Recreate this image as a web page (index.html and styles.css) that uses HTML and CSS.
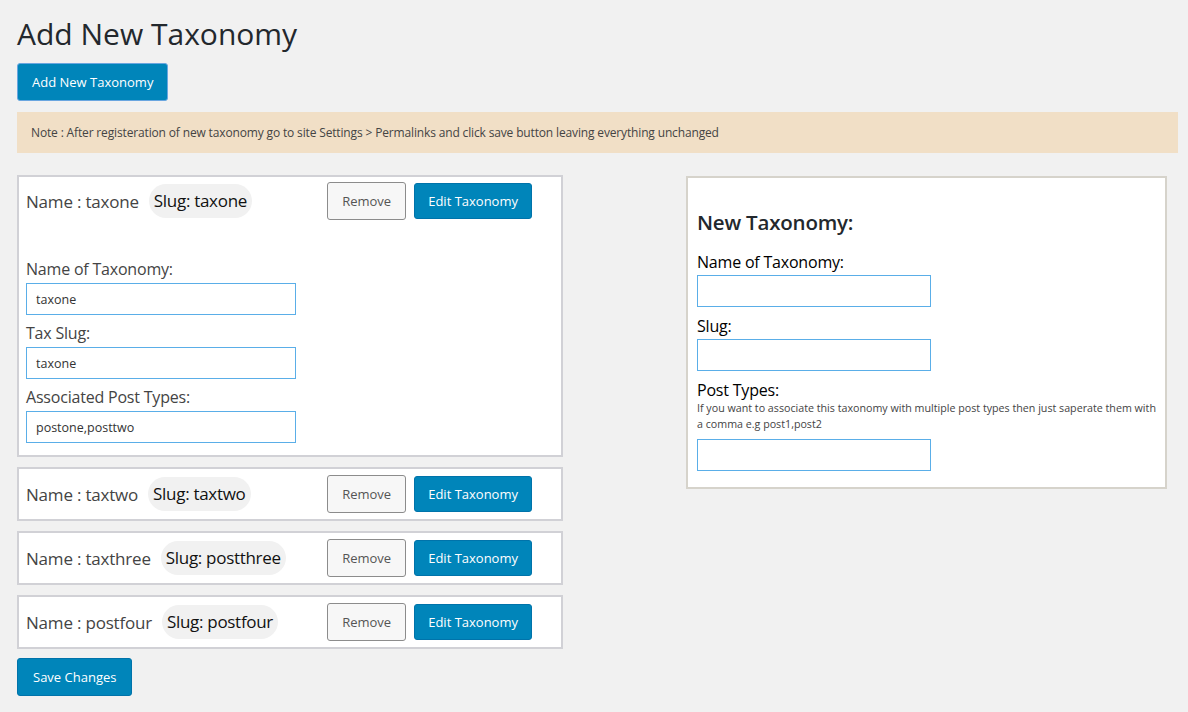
FILE: index.html
```html
<!DOCTYPE html>
<html>
<head>
<meta charset="utf-8">
<link rel="stylesheet" href="styles.css">
</head>
<body>
<div class="wrap">
  <h1 class="title">Add New Taxonomy</h1>
  <button class="btn btn-primary btn-add">Add New Taxonomy</button>
  <div class="notice">Note : After registeration of new taxonomy go to site Settings &gt; Permalinks and click save button leaving everything unchanged</div>
  <div class="columns">
    <div class="left">
      <div class="card">
        <div class="row">
          <span class="name">Name : taxone</span>
          <span class="slug">Slug: taxone</span>
          <span class="actions">
            <button class="btn btn-secondary">Remove</button>
            <button class="btn btn-primary">Edit Taxonomy</button>
          </span>
        </div>
        <div class="edit">
          <label class="lbl">Name of Taxonomy:</label>
          <input class="inp" type="text" value="taxone">
          <label class="lbl">Tax Slug:</label>
          <input class="inp" type="text" value="taxone">
          <label class="lbl">Associated Post Types:</label>
          <input class="inp" type="text" value="postone,posttwo">
        </div>
      </div>
      <div class="card">
        <div class="row">
          <span class="name">Name : taxtwo</span>
          <span class="slug">Slug: taxtwo</span>
          <span class="actions">
            <button class="btn btn-secondary">Remove</button>
            <button class="btn btn-primary">Edit Taxonomy</button>
          </span>
        </div>
      </div>
      <div class="card">
        <div class="row">
          <span class="name">Name : taxthree</span>
          <span class="slug">Slug: postthree</span>
          <span class="actions">
            <button class="btn btn-secondary">Remove</button>
            <button class="btn btn-primary">Edit Taxonomy</button>
          </span>
        </div>
      </div>
      <div class="card">
        <div class="row">
          <span class="name">Name : postfour</span>
          <span class="slug">Slug: postfour</span>
          <span class="actions">
            <button class="btn btn-secondary">Remove</button>
            <button class="btn btn-primary">Edit Taxonomy</button>
          </span>
        </div>
      </div>
      <button class="btn btn-primary btn-save">Save Changes</button>
    </div>
    <div class="right">
      <h2 class="panel-title">New Taxonomy:</h2>
      <label class="rlbl">Name of Taxonomy:</label>
      <input class="inp rinp" type="text">
      <label class="rlbl">Slug:</label>
      <input class="inp rinp" type="text">
      <label class="rlbl rlbl-post">Post Types:</label>
      <p class="hint">If you want to associate this taxonomy with multiple post types then just saperate them with a comma e.g post1,post2</p>
      <input class="inp rinp" type="text">
    </div>
  </div>
</div>
</body>
</html>
```
FILE: styles.css
```css
html, body {
  margin: 0;
  padding: 0;
  background: #f1f1f1;
}
body {
  font-family: "Open Sans", "Noto Sans", "Liberation Sans", sans-serif;
  color: #444;
}
.wrap {
  padding: 14px 10px 0 17px;
}
.title {
  margin: 0;
  font-size: 30px;
  font-weight: 400;
  color: #23282d;
  line-height: 40px;
  letter-spacing: 0;
}
.btn {
  font-family: inherit;
  font-size: 13px;
  border-radius: 3px;
  cursor: pointer;
  padding: 0 13px;
  letter-spacing: 0;
}
.btn-primary {
  background: #0085ba;
  border: 1px solid #0073aa;
  color: #fff;
  height: 36px;
}
.btn-secondary {
  background: #f7f7f7;
  border: 1px solid #8c8c8c;
  color: #555;
  height: 38px;
  padding: 0 14px;
}
.btn-add {
  margin-top: 9px;
  height: 38px;
  padding: 0 14px;
  border: 1px solid #6aa6e0;
}
.notice {
  margin-top: 11px;
  background: #f1dfc6;
  font-size: 12px;
  color: #444;
  padding: 0 14px;
  height: 41px;
  line-height: 41px;
  letter-spacing: -0.15px;
}
.columns {
  display: flex;
  gap: 123px;
  margin-top: 22px;
}
.left {
  width: 546px;
  display: flex;
  flex-direction: column;
  gap: 10px;
}
.card {
  background: #fff;
  border: 2px solid #d1d1d6;
}
.row {
  display: flex;
  align-items: center;
  height: 50px;
  padding: 0 7px;
}
.card:first-child .row {
  height: 48px;
}
.name {
  font-size: 17px;
  color: #444;
  letter-spacing: -0.2px;
}
.slug {
  margin-left: 10px;
  background: #f1f1f1;
  color: #111;
  font-size: 17px;
  letter-spacing: -0.3px;
  border-radius: 17px;
  height: 34px;
  line-height: 34px;
  padding: 0 5px;
}
.actions {
  margin-left: auto;
  margin-right: 22px;
  display: flex;
  gap: 8px;
  align-items: center;
}
.edit {
  display: flex;
  flex-direction: column;
  align-items: flex-start;
  padding: 34px 7px 12px;
}
.lbl {
  font-size: 16px;
  color: #444;
  letter-spacing: -0.2px;
  line-height: 20px;
  margin-bottom: 4px;
}
.inp {
  box-sizing: border-box;
  width: 270px;
  height: 32px;
  border: 1px solid #5aaee8;
  background: #fff;
  font-family: inherit;
  font-size: 12.5px;
  color: #333;
  padding: 0 9px;
  margin: 0 0 8px;
  outline: none;
}
.edit .inp:last-child {
  margin-bottom: 0;
}
.btn-save {
  align-self: flex-start;
  height: 38px;
  margin-top: -1px;
  padding: 0 15px;
}
.right {
  box-sizing: border-box;
  width: 481px;
  height: 313px;
  margin-top: 1px;
  background: #fff;
  border: 2px solid #d6d3cb;
  padding: 28px 4px 0 9px;
  display: flex;
  flex-direction: column;
  align-items: flex-start;
}
.panel-title {
  margin: 0 0 14px;
  font-size: 20.5px;
  font-weight: 600;
  color: #23282d;
  letter-spacing: -0.2px;
  line-height: 32px;
}
.rlbl {
  font-size: 16px;
  color: #000;
  letter-spacing: -0.2px;
  line-height: 20px;
  margin-bottom: 3px;
}
.rinp {
  width: 234px;
  margin-bottom: 9px;
}
.rlbl-post {
  margin-bottom: 0;
}
.hint {
  margin: 0 0 7px;
  font-size: 10.7px;
  line-height: 16px;
  color: #444;
  letter-spacing: 0;
}
```
